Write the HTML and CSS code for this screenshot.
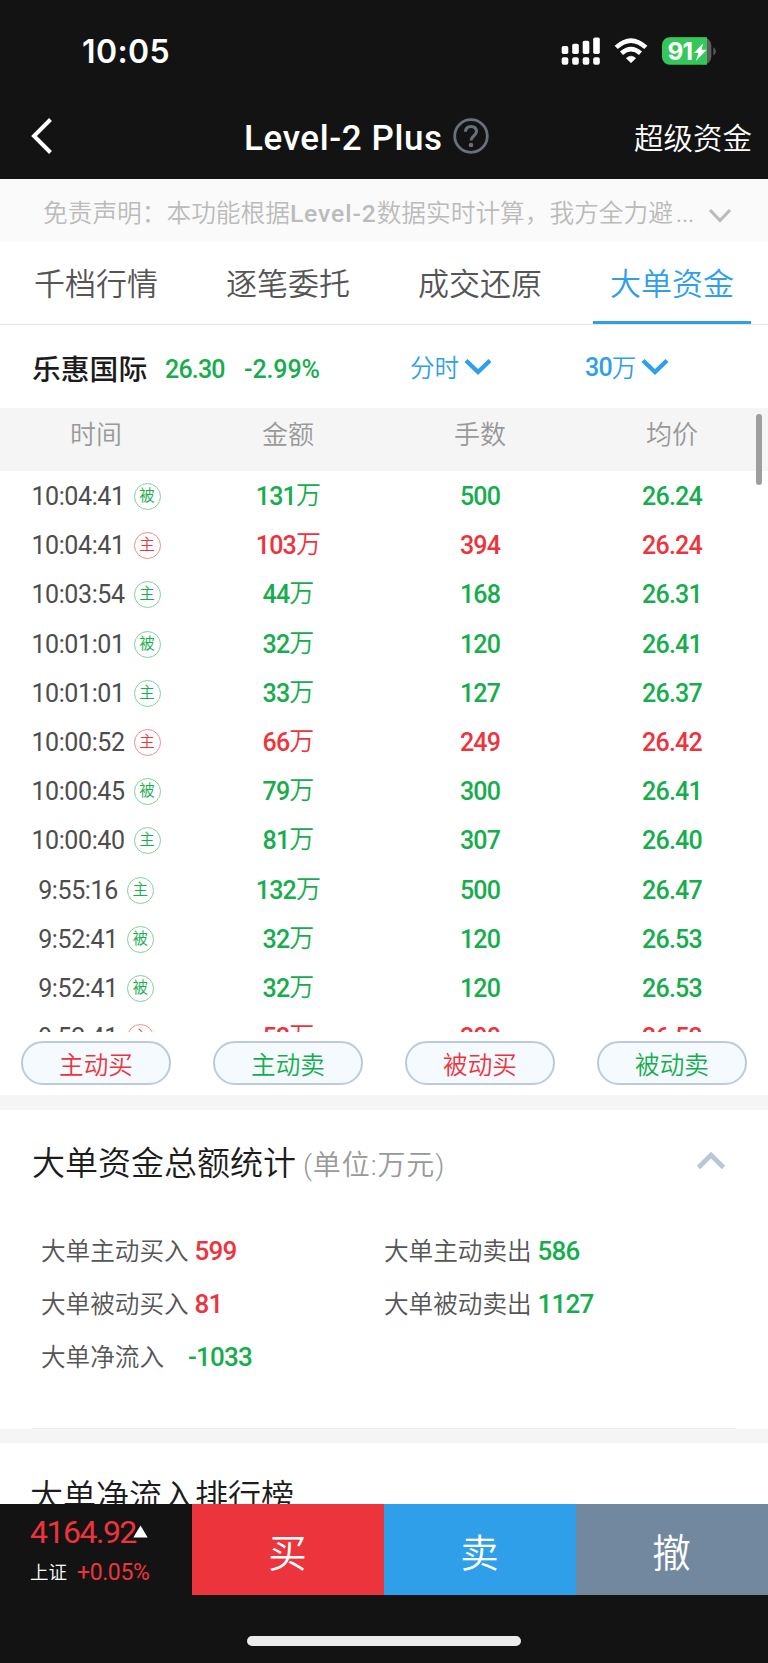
FILE: index.html
```html
<!DOCTYPE html>
<html lang="zh-CN">
<head>
<meta charset="utf-8">
<title>Level-2 Plus</title>
<link rel="stylesheet" href="styles.css">
</head>
<body>
<div class="screen">
  <header class="top">
    <div class="status">
      <span class="clock">10:05</span>
      <svg class="status-icons" width="160" height="30" viewBox="0 0 160 30">
        <g fill="#fff">
          <rect x="1.7" y="10" width="6.6" height="8" rx="1.8"/><rect x="12.2" y="7.8" width="6.6" height="10.2" rx="1.8"/><rect x="22.7" y="4.8" width="6.6" height="13.2" rx="1.8"/><rect x="33.2" y="1.4" width="6.6" height="16.6" rx="1.8"/>
          <rect x="1.7" y="21.2" width="6.6" height="7.5" rx="2"/><rect x="12.2" y="21.2" width="6.6" height="7.5" rx="2"/><rect x="22.7" y="21.2" width="6.6" height="7.5" rx="2"/><rect x="33.2" y="21.2" width="6.6" height="7.5" rx="2"/>
          <path d="M71 26.8l-4.7-4.6q4.7-4 9.4 0z" stroke="#fff" stroke-width=".6" stroke-linejoin="round"/>
        </g>
        <g fill="none" stroke="#fff" stroke-width="4.600">
          <path d="M56.2 11.4q14.800-13.600 29.600 0"/><path d="M61.500 17.200q9.500-8.300 19 0"/>
        </g>
        <path d="M109.500 1.300h33.800a8 8 0 0 1 8 8v11.400a8 8 0 0 1-8 8z" fill="#5c5c5e"/>
        <path d="M109.800 1.300H147v27.400h-37.200a7.800 7.800 0 0 1-7.800-7.800V9.100a7.800 7.800 0 0 1 7.800-7.800z" fill="#34c759"/>
        <path d="M153.400 11.200q2.400 1.300 2.400 4t-2.400 4z" fill="#5c5c5e"/>
        <text class="battery-text" x="107.500" y="24">91</text>
        <path d="M143.200 7.200l-9.300 9.800h4.700l-2.800 8 10.900-11.200h-5.200z" fill="#fff"/>
      </svg>
    </div>
    <div class="nav">
      <svg class="back" width="24" height="40" viewBox="0 0 24 40"><path d="M20.500 3.500L4 20l16.500 16.500" fill="none" stroke="#fff" stroke-width="4"/></svg>
      <h1 class="nav-title">Level-2 Plus</h1>
      <svg class="help" width="36" height="36" viewBox="0 0 36 36" fill="none" stroke="#68707a"><circle cx="18" cy="18" r="16.300" stroke-width="2.800"/><path d="M12.500 13.800q.2-5.300 5.500-5.300t5.500 5c0 4.500-5.500 4.500-5.500 8.900" stroke-width="3"/><circle cx="18" cy="27" r="2.300" fill="#68707a" stroke="none"/></svg>
      <span class="nav-action">超级资金</span>
    </div>
  </header>

  <div class="notice">
    <span class="notice-text">免责声明：本功能根据<b class="latin">Level-2</b>数据实时计算，我方全力避<b class="dots">…</b></span>
    <svg width="24" height="18" viewBox="0 0 24 18"><path d="M2 3l10 10.500L22 3" fill="none" stroke="#bbb" stroke-width="3.200"/></svg>
  </div>

  <nav class="tabs">
    <a class="tab">千档行情</a><a class="tab">逐笔委托</a><a class="tab">成交还原</a><a class="tab tab-active">大单资金</a>
  </nav>

  <div class="stock">
    <span class="stock-name">乐惠国际</span>
    <span class="num stock-price down">26.30</span>
    <span class="num stock-change down">-2.99%</span>
    <span class="picker picker-mode">分时<svg width="28" height="20" viewBox="0 0 28 20"><path d="M2 2.500l12 11.500L26 2.500" fill="none" stroke="#309fea" stroke-width="4.400"/></svg></span>
    <span class="picker"><b class="num">30</b>万<svg width="28" height="20" viewBox="0 0 28 20"><path d="M2 2.500l12 11.500L26 2.500" fill="none" stroke="#309fea" stroke-width="4.400"/></svg></span>
  </div>

  <section class="orders">
    <div class="orders-head"><span>时间</span><span>金额</span><span>手数</span><span>均价</span></div>
    <div class="scrollbar"></div>
    <div class="orders-body">
      <div class="row down"><span class="time"><b>10:04:41</b><i class="tag">被</i></span><span class="num">131<i>万</i></span><span class="num">500</span><span class="num">26.24</span></div>
      <div class="row up"><span class="time"><b>10:04:41</b><i class="tag">主</i></span><span class="num">103<i>万</i></span><span class="num">394</span><span class="num">26.24</span></div>
      <div class="row down"><span class="time"><b>10:03:54</b><i class="tag">主</i></span><span class="num">44<i>万</i></span><span class="num">168</span><span class="num">26.31</span></div>
      <div class="row down"><span class="time"><b>10:01:01</b><i class="tag">被</i></span><span class="num">32<i>万</i></span><span class="num">120</span><span class="num">26.41</span></div>
      <div class="row down"><span class="time"><b>10:01:01</b><i class="tag">主</i></span><span class="num">33<i>万</i></span><span class="num">127</span><span class="num">26.37</span></div>
      <div class="row up"><span class="time"><b>10:00:52</b><i class="tag">主</i></span><span class="num">66<i>万</i></span><span class="num">249</span><span class="num">26.42</span></div>
      <div class="row down"><span class="time"><b>10:00:45</b><i class="tag">被</i></span><span class="num">79<i>万</i></span><span class="num">300</span><span class="num">26.41</span></div>
      <div class="row down"><span class="time"><b>10:00:40</b><i class="tag">主</i></span><span class="num">81<i>万</i></span><span class="num">307</span><span class="num">26.40</span></div>
      <div class="row down"><span class="time"><b>9:55:16</b><i class="tag">主</i></span><span class="num">132<i>万</i></span><span class="num">500</span><span class="num">26.47</span></div>
      <div class="row down"><span class="time"><b>9:52:41</b><i class="tag">被</i></span><span class="num">32<i>万</i></span><span class="num">120</span><span class="num">26.53</span></div>
      <div class="row down"><span class="time"><b>9:52:41</b><i class="tag">被</i></span><span class="num">32<i>万</i></span><span class="num">120</span><span class="num">26.53</span></div>
      <div class="row up"><span class="time"><b>9:52:41</b><i class="tag">主</i></span><span class="num">53<i>万</i></span><span class="num">200</span><span class="num">26.53</span></div>
    </div>
    <div class="filters">
      <button class="pill up">主动买</button><button class="pill down">主动卖</button><button class="pill up">被动买</button><button class="pill down">被动卖</button>
    </div>
  </section>

  <section class="summary">
    <div class="summary-head">
      <h2 class="section-title">大单资金总额统计</h2>
      <span class="unit">(单位:万元)</span>
      <svg width="30" height="22" viewBox="0 0 30 22"><path d="M2.500 17.500L15 5l12.500 12.500" fill="none" stroke="#b8c6d6" stroke-width="4.600"/></svg>
    </div>
    <div class="stats">
      <div class="stat"><span>大单主动买入</span><b class="num up">599</b></div>
      <div class="stat"><span>大单主动卖出</span><b class="num down">586</b></div>
      <div class="stat"><span>大单被动买入</span><b class="num up">81</b></div>
      <div class="stat"><span>大单被动卖出</span><b class="num down">1127</b></div>
      <div class="stat stat-net"><span>大单净流入</span><b class="num down">-1033</b></div>
    </div>
  </section>

  <section class="ranking"><h2 class="section-title">大单净流入排行榜</h2></section>

  <footer class="bottom">
    <div class="trade">
      <div class="index">
        <div class="index-value">4164.92<svg width="15" height="13" viewBox="0 0 15 13"><path d="M7.500 .5l7.200 12H.3z" fill="#fff"/></svg></div>
        <div class="index-sub">上证<span>+0.05%</span></div>
      </div>
      <button class="action buy">买</button><button class="action sell">卖</button><button class="action cancel">撤</button>
    </div>
    <div class="home"></div>
  </footer>
</div>
</body>
</html>
```
FILE: styles.css
```css
* { box-sizing: border-box; }
body { margin: 0; }
b, i, h1, h2 { font-weight: inherit; font-style: normal; margin: 0; }
button { font-family: inherit; padding: 0; border: 0; font-weight: inherit; }
svg { flex: none; display: block; }

.screen {
  width: 768px; height: 1663px; overflow: hidden;
  display: flex; flex-direction: column;
  background: #fff; color: #555;
  font-family: Roboto, "Noto Sans CJK SC", sans-serif;
  font-weight: 350; white-space: nowrap;
}
.screen > * { flex: none; }
.up { color: #ee333c; }
.down { color: #16ad4d; }
.num { font-weight: 500; font-size: 25px; letter-spacing: -.8px; }

.top { height: 179px; background: #131313; color: #fff; }
.status { height: 100px; padding: 36px 48px 0 82px; display: flex; justify-content: space-between; }
.clock { font: 600 32px/32px Inter, sans-serif; letter-spacing: .4px; }
.battery-text { font: 700 24.500px Inter, sans-serif; fill: #fff; letter-spacing: -1px; }
.nav { height: 72px; display: flex; align-items: center; padding: 0 16px 0 30px; }
.nav-title { margin-left: 190px; font-size: 35px; font-weight: 500; letter-spacing: .6px; width: 199px; padding-top: 4px; }
.help { margin-left: 10px; }
.nav-action { margin-left: auto; font-size: 29.500px; }

.notice { height: 63px; padding: 0 36px 0 43px; display: flex; align-items: center; justify-content: space-between; background: #fafafa; color: #bbb; font-size: 24.700px; }
.latin { font-weight: 500; letter-spacing: .9px; }
.dots { margin-left: 2px; font-size: 31px; line-height: 24px; }
.notice svg { margin-top: 11px; }

.tabs { height: 83px; display: grid; grid-template-columns: repeat(4, 1fr); border-bottom: 1px solid #e4e4e4; }
.tab { display: flex; align-items: center; justify-content: center; font-size: 31px; padding-bottom: 4px; }
.tab-active { color: #309fea; margin: 0 17px; border-bottom: 3px solid #309fea; padding: 0; }

.stock { height: 83px; display: flex; align-items: center; padding: 3px 0 0 32px; }
.stock-name { font-size: 28.800px; font-weight: 500; color: #1c1c1c; width: 133px; padding-bottom: 2px; }
.stock-price { width: 79px; padding-top: 3px; }
.stock-change { width: 166px; padding-top: 3px; letter-spacing: -.1px; }
.picker { display: flex; align-items: center; color: #309fea; font-size: 24.600px; padding-bottom: 4px; }
.picker .num { padding-top: 2px; }
.picker svg { margin: 3px 0 0 5px; }
.picker-mode { width: 175px; }

.orders { position: relative; height: 687px; }
.orders-head, .row, .filters { display: grid; grid-template-columns: repeat(4, 192px); text-align: center; align-items: center; }
.orders-head { height: 63px; padding-bottom: 14px; background: #f5f5f5; color: #999; font-size: 26px; }
.scrollbar { position: absolute; right: 6px; top: 6px; width: 6px; height: 71px; border-radius: 3px; background: #9e9e9e; }
.orders-body { height: 561px; overflow: hidden; padding-top: 1px; }
.row { height: 49.200px; }
.row .num, .time b { line-height: 30px; padding-top: 1px; }
.row .num i { font-weight: 350; line-height: 0; vertical-align: 1px; }
.time { display: flex; align-items: center; justify-content: center; gap: 9px; color: #4d4d4d; }
.time b { font-size: 25px; font-weight: 450; letter-spacing: -.4px; }
.tag { width: 27px; height: 27px; border: 1px solid; border-radius: 50%; font-size: 15.500px; line-height: 25px; }
.up .tag { color: #ee333c; border-color: #f58b90; }
.down .tag { color: #16ad4d; border-color: #7fd29c; }
.filters { justify-items: center; padding-top: 9px; }
.pill { width: 150px; height: 44px; border: 2px solid #bccadb; border-radius: 22px; background: #f5faff; font-size: 24.600px; }

.summary { height: 334px; border-top: 15px solid #f5f5f5; }
.summary-head { height: 102px; padding: 0 42px 0 32px; display: flex; align-items: center; }
.section-title { font-size: 33px; color: #1c1c1c; }
.unit { margin-left: 7px; padding-top: 3px; color: #999; font-size: 28px; letter-spacing: .9px; }
.summary-head svg { margin-left: auto; }
.stats { margin: 0 32px; height: 217px; padding: 13px 0 0 9px; border-bottom: 1px solid #ececec; display: grid; grid-template-columns: 343px 1fr; grid-auto-rows: 53.200px; }
.stat { display: flex; align-items: center; font-size: 24.600px; }
.stat span { padding-bottom: 5px; }
.stat .num { margin-left: 6px; padding-bottom: 2px; font-size: 26px; }
.stat-net .num { margin-left: 24px; }

.ranking { height: 75px; border-top: 14px solid #f5f5f5; padding: 35px 0 0 30px; overflow: hidden; }
.ranking .section-title { line-height: 38px; }

.bottom { height: 159px; background: #131313; color: #fff; }
.trade { height: 91px; display: grid; grid-template-columns: repeat(4, 192px); }
.index { padding: 8px 0 0 30px; color: #ee333c; }
.index-value { display: flex; align-items: center; font-size: 32px; line-height: 40px; font-weight: 450; letter-spacing: -1.500px; }
.index-value svg { margin: -2px 0 0 -3px; }
.index-sub { color: #fff; font-size: 18.500px; line-height: 40px; display: flex; align-items: center; }
.index-sub span { color: #ee333c; font-size: 23px; font-weight: 450; margin-left: 10px; padding-top: 1px; letter-spacing: -.4px; }
.action { color: #fff; font-size: 38.500px; padding-right: 1px; }
.buy { background: #ec343c; }
.sell { background: #309fea; }
.cancel { background: #72889f; }
.home { width: 274px; height: 10px; margin: 41px auto 0; border-radius: 5px; background: #ececec; }
```
